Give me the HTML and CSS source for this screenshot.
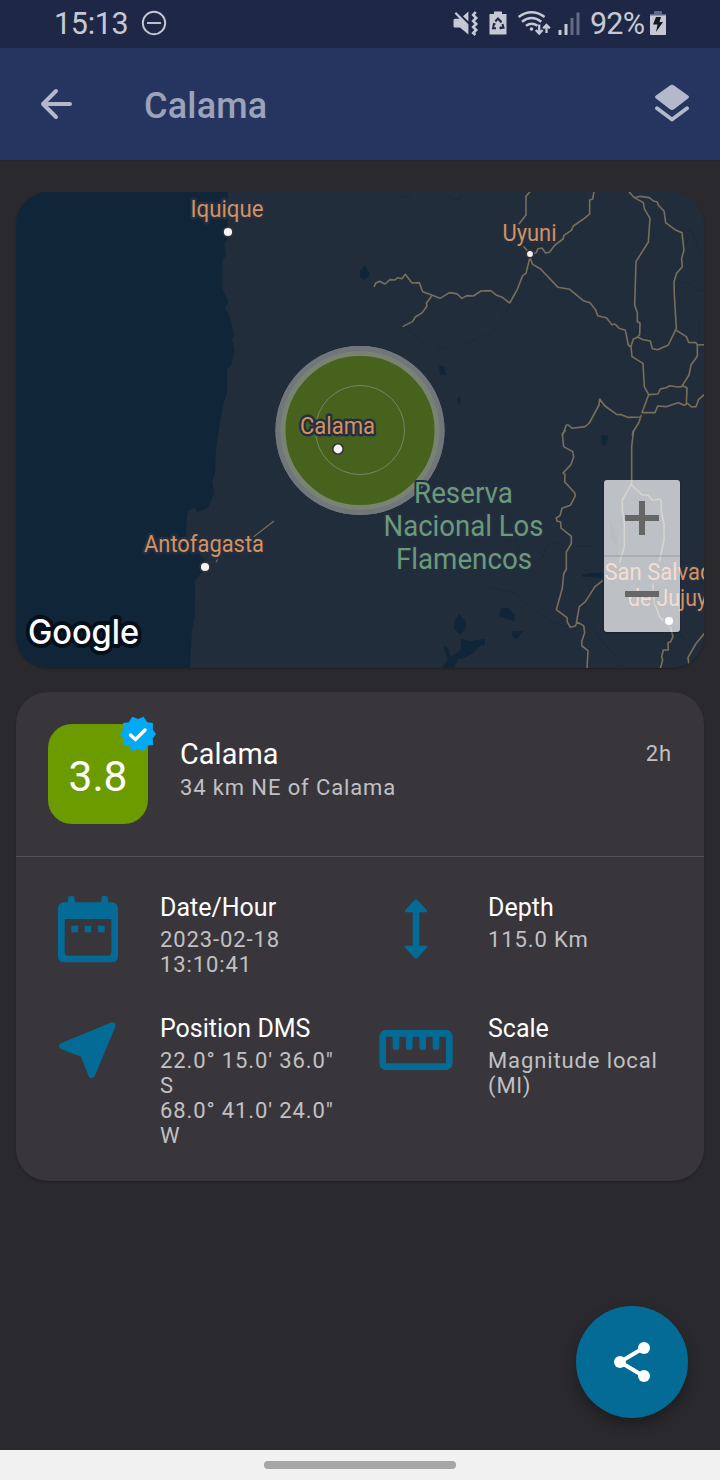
FILE: index.html
```html
<!DOCTYPE html>
<html lang="en">
<head>
<meta charset="utf-8">
<title>Calama</title>
<link rel="stylesheet" href="styles.css">
</head>
<body>
<div class="screen">
  <header class="status">
    <span class="clock">15:13</span>
    <svg class="dnd" width="26" height="26" viewBox="0 0 26 26" fill="none" stroke="#c6c9d3" stroke-width="1.9"><circle cx="13" cy="13" r="11.2"/><path d="M6 13h14"/></svg>
    <svg class="tray" width="136" height="30" viewBox="450 8 136 30" fill="#c6c9d3">
      <path d="M454.600 13.400l1.500-1.500 12.300 12.300v10.300l-8.400-7h-5q-1.500 0-1.500-1.500v-5.800q0-1.500 1.500-1.500h4.600zM463 16.200l5.400-4.700v10z"/>
      <path d="M475.700 12l-2.500 3 3 3-3 3 3 3-3 3 3 3-3 3 2.200 2" fill="none" stroke="#c6c9d3" stroke-width="2.600"/>
      <path d="M494 11.500h8v2.500h4.500v20.500h-17V14h4.500z"/>
      <g fill="none" stroke="#1e2746" stroke-width="2"><path d="M495.300 21.500l2.700-3 3 3.500M502.500 24l1 3.700-3.500.5M496 28.200h-3l1-4.500"/><path d="M500 20l1.500 2.500M501.500 26.500l-2 2M493 23.500l2.500.8" stroke-width="1.500"/></g>
      <g fill="none" stroke="#c6c9d3" stroke-width="2.500"><path d="M518.600 17q13-9.500 26 0M522 21.700q9.700-7.500 19.300 0M526 25.800q5.700-4 11.500 0"/></g><circle cx="531.500" cy="29" r="1.800"/>
      <g stroke="#c6c9d3" stroke-width="2.300" fill="none"><path d="M539.200 24.500v8M535.800 30l3.400 3.500 3.400-3.500M546.500 33v-7M543.200 28.400l3.300-3.400 3.300 3.400"/></g>
      <rect x="558.500" y="30" width="3" height="5"/><rect x="564.500" y="24" width="3" height="11"/><g fill="#626b84"><rect x="570.500" y="18" width="3" height="17"/><rect x="576.500" y="12.500" width="3" height="22.500"/></g>
    </svg>
    <span class="percent">92%</span>
    <svg class="battery" width="16" height="24" viewBox="0 0 16 24"><path d="M4 4V1q0-1 1-1h6q1 0 1 1v3z" fill="#626b84"/><path d="M0 3h16v20q0 1-1 1H1q-1 0-1-1z" fill="#c6c9d3"/><path d="M0 3h16v1.500H0z" fill="#626b84"/><path d="M6 6h5l-1.500 5H13L6 21l1.500-7.500H3z" fill="#17191f"/></svg>
  </header>
  <nav class="appbar">
    <svg class="back" width="32" height="32" viewBox="0 0 32 32" fill="none" stroke="#b3b8ca" stroke-width="4" stroke-linecap="round" stroke-linejoin="round"><path d="M30 16H3M16 3L3 16l13 13"/></svg>
    <h1 class="title">Calama</h1>
    <svg class="layers" width="34" height="38" viewBox="0 0 34 38" fill="#b3b8ca"><path d="M14.900 1.600q2.100-1.500 4.200 0L33 11.500q2 1.500 0 3L19.100 25.200q-2.100 1.500-4.200 0L1 14.500q-2-1.500 0-3z"/><path d="M2 24.200l15 11.300 15-11.300" fill="none" stroke="#b3b8ca" stroke-width="3.800" stroke-linecap="round" stroke-linejoin="round"/></svg>
  </nav>
  <main class="content">
    <section class="map">
      <svg class="map-art" width="688" height="476" viewBox="16 192 688 476">
        <rect x="16" y="192" width="688" height="476" fill="#222d3b"/>
        <g fill="#112539">
          <path transform="translate(16 185) scale(.33333)" d="M0 0H636V160L625 175 630 210 619 230V310L638 350 627 368 640 390 655 450 648 462 656 498 645 542 634 552 633 625 625 645 614 700 606 752H0z"/>
          <path transform="translate(16 430) scale(.33333)" d="M0-5H607L600 60 597 135 589 150 595 190 577 232 541 248 537 232 515 244 511 275V365L550 372 567 390V415L537 452 536 565 528 600 522 720H0z"/>
          <path transform="translate(360 185) scale(.33333)" d="M0 258L15 242 30 267 14 287 0 275zM237 542L252 543 258 570 240 569zM291 642L302 635 299 660z"/>
          <path transform="translate(360 430) scale(.33333)" d="M723 15L747 18 735 47 726 43zM298 551L318 575 315 597 301 614 283 598 284 570zM423 534L447 533 464 556 463 574 418 559zM456 604L489 603 470 628 457 618zM302 625L331 634 375 626 374 645 359 649 337 671 308 686 293 688 283 713H246L264 688 250 648 262 652 272 681 302 660zM666 434L690 430 728 428 728 443 667 440zM751 270L772 320 770 355 750 325z"/>
        </g>
        <g fill="none" stroke="#162638" stroke-width="2" stroke-dasharray="12 5">
          <path transform="translate(360 185) scale(.33333)" d="M448 357L430 395 404 425 396 442 300 482M272 479L230 496M130 425L175 460 195 485M262 31L272 43 300 42 303 28M125 38L145 34 153 23M985 136L996 138 1018 205 1029 220M950 286L990 298 1010 313 1032 318M1018 403L1016 475"/>
          <path transform="translate(360 430) scale(.33333)" d="M466 327L477 360M500 399Q540 405 555 365T600 345M650 350Q690 340 715 365M390 472L465 490 500 525 585 580 625 590M650 575Q690 580 720 625L790 710M950 600L985 640 1000 670"/>
        </g>
        <g fill="none" stroke="#786f5b" stroke-width="4.800" stroke-linejoin="round">
          <g transform="translate(360 185) scale(.33333)">
            <path d="M510 20L498 34V90L476 118M490 184L510 206 528 204 534 191 546 189 557 204 568 202 585 180 609 162 612 151 634 136 640 123 672 101 689 87V45L698 42 702 20"/>
            <path d="M42 306L47 295 59 289 75 297 90 284 104 285 113 278 126 281 136 268 156 294 178 293 188 320 215 330 240 340 268 323 290 326 306 340 320 332 340 333 363 318 392 317 410 331 427 337 449 354 472 313 488 272 498 265 509 220M215 333L199 355 201 363 187 383 166 396 158 409 128 425"/>
            <path d="M510 218L518 238 542 252 594 307 629 313 670 347 690 353 707 375 713 392 739 398 756 419 765 417 777 430 796 436 805 480 813 486 816 515 849 535 853 605 866 629 846 683H885L893 663 918 665 955 653 973 661 982 655 995 666 1008 665 1016 643 1035 627"/>
            <path d="M805 18L823 38 850 53 853 71 870 100 865 171 828 230 824 360 832 383 832 410 840 414 839 450 830 458 820 462 813 484M823 38L840 34 868 38 880 48 891 50 896 62 912 78 917 113 948 136 966 143 972 196 965 220 967 245 950 265 942 290 943 330 949 430 925 480 893 494 877 491 871 468 850 464 832 456M949 436L979 455 986 472 1008 473 1012 480 1035 479M1012 480V514L993 540 987 570 965 605 953 606 930 602 918 608 901 612 894 627 866 629M965 600L981 609 979 657"/>
            <path d="M607 752L619 720 625 720 637 730 675 725 688 714 717 660 719 642 735 663 770 688 784 689 803 697 844 696M844 690L836 714 819 741 817 752"/>
          </g>
          <g transform="translate(360 430) scale(.33333)">
            <path d="M617 0L607 12 611 50 638 65 641 80 633 104 609 129 615 134 614 155 645 190V199L631 226 606 235 600 257 589 264 591 273 602 276 603 294 634 319V341L619 366V417L611 432 607 475 589 539 621 563 622 576 631 592 646 588 651 576 671 587 674 608 665 635 666 648 684 662 681 715M821 0L815 50V160L787 210V240L793 280V350L778 400M815 165L846 195H864L878 211 901 207 904 217 903 240 912 280V330L898 395M649 578L658 530 676 515 705 470 728 452M878 460L884 520 900 563 915 575M931 590L939 620 932 635 924 638 925 660H910L905 680 908 690 901 715M1035 608L1007 642 984 683 988 714"/>
          </g>
          <path transform="translate(16 430) scale(.33333)" d="M713 320L774 273M600 397L605 388" stroke-width="3.500"/>
        </g>
        <circle cx="360" cy="430.500" r="79.500" fill="#46621d" stroke="#798371" stroke-width="10"/>
        <circle cx="360" cy="430.500" r="82" fill="none" stroke="#71757c" stroke-width="5"/>
        <circle cx="360" cy="430" r="44.500" fill="none" stroke="#75866b" stroke-width="1"/>
        <g class="label reserve">
          <text x="414" y="503" textLength="99" lengthAdjust="spacingAndGlyphs">Reserva</text>
          <text x="383.500" y="536" textLength="160" lengthAdjust="spacingAndGlyphs">Nacional Los</text>
          <text x="396" y="569" textLength="136" lengthAdjust="spacingAndGlyphs">Flamencos</text>
        </g>
        <g class="label city">
          <text x="190.500" y="217" textLength="73" lengthAdjust="spacingAndGlyphs">Iquique</text>
          <text x="502.500" y="241" textLength="54" lengthAdjust="spacingAndGlyphs">Uyuni</text>
          <text x="300" y="434" textLength="75" lengthAdjust="spacingAndGlyphs">Calama</text>
          <text x="144" y="552" textLength="120" lengthAdjust="spacingAndGlyphs">Antofagasta</text>
          <text x="604.500" y="580" textLength="128" lengthAdjust="spacingAndGlyphs">San Salvador</text>
          <text x="628" y="606" textLength="79" lengthAdjust="spacingAndGlyphs">de Jujuy</text>
        </g>
        <g fill="#f4f4f4" stroke="#333338" stroke-width="1.600"><circle cx="228" cy="232" r="4.900"/><circle cx="530" cy="254" r="3.700"/><circle cx="338" cy="449" r="5.200"/><circle cx="205" cy="567" r="4.900"/><circle cx="669" cy="621" r="4.900"/></g>
        <text class="brand" x="28" y="643.500" textLength="111" lengthAdjust="spacingAndGlyphs">Google</text>
      </svg>
      <div class="zoom">
        <span class="zoom-btn"><svg width="34" height="34" viewBox="0 0 34 34" fill="none" stroke="#666" stroke-width="6"><path d="M0 17h34M17 0v34"/></svg></span>
        <span class="zoom-btn"><svg width="34" height="34" viewBox="0 0 34 34" fill="none" stroke="#666" stroke-width="6"><path d="M0 16h34"/></svg></span>
      </div>
    </section>
    <section class="card">
      <div class="summary">
        <div class="magnitude">3.8
          <svg class="verified" width="36" height="36" viewBox="0 0 36 36"><path d="M36 18l-3.200 4.400L33 29l-5.700.8L23.700 35.300 18 33l-5.700 2.300-3.600-5.500L3 29l.2-6.600L0 18l3.200-4.400L3 7l5.700-.8L12.300.7 18 3l5.700-2.300 3.600 5.500L33 7l-.2 6.600z" fill="#03a9f4"/><path d="M10.500 19l5 4.500 9.500-9.500" fill="none" stroke="#fff" stroke-width="3.400" stroke-linecap="round"/></svg>
        </div>
        <div class="place"><h2 class="place-name">Calama</h2><p class="detail">34 km NE of Calama</p></div>
        <span class="detail age">2h</span>
      </div>
      <div class="facts">
        <div class="fact">
          <svg class="icon" viewBox="0 0 24 24" fill="#046b97"><path fill-rule="evenodd" d="M6 4V3q0-1 1-1t1 1v1h8V3q0-1 1-1t1 1v1h1q2 0 2 2v14q0 2-2 2H5q-2 0-2-2V6q0-2 2-2zM5 9v10q0 1 1 1h12q1 0 1-1V9zM7 11h2v2H7zm4 0h2v2h-2zm4 0h2v2h-2z"/></svg>
          <div><h3 class="fact-name">Date/Hour</h3><p class="detail">2023-02-18<br>13:10:41</p></div>
        </div>
        <div class="fact">
          <svg class="icon" viewBox="0 0 24 24" fill="#046b97"><path d="M11.500 3.400q.5-.5 1 0l2.700 2.900q.4.700-.4.700H13v10h1.800q.8 0 .4.700l-2.700 2.900q-.5.500-1 0l-2.700-2.900q-.4-.7.400-.7H11V7H9.200q-.8 0-.4-.7z"/></svg>
          <div><h3 class="fact-name">Depth</h3><p class="detail">115.0 Km</p></div>
        </div>
        <div class="fact">
          <svg class="icon" viewBox="0 0 24 24" fill="#046b97"><path d="M18.800 3.850q1.700-.5 1.400 1.200L14 19.900q-.9 1.200-1.800 0L9.900 14 3.900 11.700q-1.200-.8 0-1.700z"/></svg>
          <div><h3 class="fact-name">Position DMS</h3><p class="detail">22.0° 15.0' 36.0"<br>S<br>68.0° 41.0' 24.0"<br>W</p></div>
        </div>
        <div class="fact">
          <svg class="icon" viewBox="0 0 24 24" fill="none" stroke="#046b97" stroke-width="2"><rect x="2" y="7" width="20" height="10" rx="1"/><path d="M6 8v3M10 8v3M14 8v3M18 8v3" stroke-linecap="round"/></svg>
          <div><h3 class="fact-name">Scale</h3><p class="detail">Magnitude local<br>(Ml)</p></div>
        </div>
      </div>
    </section>
    <button class="share" aria-label="Share"><svg width="38" height="42" viewBox="0 0 38 42"><path d="M30.500 7L7 21l23.500 14" fill="none" stroke="#fff" stroke-width="4"/><g fill="#fff"><circle cx="31" cy="7" r="6"/><circle cx="7" cy="21" r="6"/><circle cx="31" cy="35" r="6"/></g></svg></button>
  </main>
  <footer class="gesture"><span class="handle"></span></footer>
</div>
</body>
</html>
```
FILE: styles.css
```css
* { box-sizing: border-box; }
body, h1, h2, h3, p { margin: 0; font-weight: 400; }
svg { display: block; flex: none; }
body { font-family: Roboto, "Noto Sans", sans-serif; background: #2a292d; }
.screen { width: 720px; height: 1480px; display: flex; flex-direction: column; overflow: hidden; }

.status { height: 48px; background: #1e2746; color: #c6c9d3; display: flex; align-items: center; padding: 0 54px; font-size: 30.5px; }
.clock { letter-spacing: -0.3px; width: 75px; padding-bottom: 2px; }
.dnd { margin: -2px 0 0 12px; }
.tray { margin-left: auto; margin-top: -2px; }
.percent { margin-left: 4px; width: 60px; letter-spacing: -.8px; padding-bottom: 2px; }
.battery { margin-top: -2px; }

.appbar { height: 112px; background: #253560; display: flex; align-items: center; padding: 0 31px 0 40px; }
.title { margin-left: 72px; padding-top: 4px; font-size: 36px; font-weight: 500; letter-spacing: .2px; color: #9ba2b9; }
.layers { margin-left: auto; margin-top: -2px; }

.content { flex: 1; display: flex; flex-direction: column; padding: 31px 16px 0; border-top: 1px solid #252730; }
.map { height: 476px; position: relative; flex: none; border-radius: 32px; overflow: hidden; box-shadow: 0 1px 2px rgba(0, 0, 0, .25); }
.label { paint-order: stroke; stroke: #232e40; stroke-linejoin: round; }
.city { font-size: 24px; fill: #d3925f; stroke-width: 5px; }
.reserve { font-size: 29px; fill: #6a9a78; stroke-width: 4px; }
.brand { font-family: Inter, sans-serif; font-size: 34px; font-weight: 500; fill: #fff; paint-order: stroke; stroke: #06101b; stroke-width: 8px; stroke-linejoin: round; }
.zoom { position: absolute; left: 588px; top: 288px; width: 76px; height: 152px; background: rgba(255, 255, 255, .7); border-radius: 3px; box-shadow: 0 1px 2px rgba(0, 0, 0, .3); display: flex; flex-direction: column; }
.zoom-btn { flex: 1; display: flex; align-items: center; justify-content: center; }
.zoom-btn + .zoom-btn { border-top: 2px solid rgba(100, 100, 100, .2); }

.card { margin-top: 24px; height: 489px; flex: none; border-radius: 32px; background: #38363b; box-shadow: 0 1px 2px rgba(0, 0, 0, .25); }
.summary { height: 165px; border-bottom: 1px solid #515054; padding: 32px; display: flex; }
.magnitude { position: relative; width: 100px; height: 100px; border-radius: 24px; background: #6c9b00; color: #fff; font-size: 42.500px; line-height: 106px; text-align: center; }
.verified { position: absolute; left: 72px; top: -8px; }
.place { margin-left: 32px; padding-top: 13px; }
.place-name { font-size: 28.800px; line-height: 34px; letter-spacing: .1px; color: #fff; }
.detail { font-size: 22px; line-height: 25px; letter-spacing: .88px; color: #c1c1c3; }
.place .detail { margin-top: 4px; }
.age { margin: 17px 0 0 auto; }
.facts { display: grid; grid-template-columns: 328px 1fr; grid-template-rows: 121px auto; padding: 32px; }
.fact { display: flex; gap: 32px; }
.fact > div { padding-top: 4px; }
.icon { width: 80px; height: 80px; }
.fact-name { font-size: 25px; line-height: 30px; color: #fff; margin-bottom: 4px; }

.share { margin: 125px 16px 0 auto; width: 112px; height: 112px; flex: none; border: 0; border-radius: 50%; background: #046b97; box-shadow: 0 7px 14px rgba(0, 0, 0, .3); display: flex; align-items: center; justify-content: center; padding: 0; }
.gesture { height: 30px; background: #f1f1f1; display: flex; align-items: center; justify-content: center; }
.handle { width: 192px; height: 8px; border-radius: 4px; background: #a6a6a6; }
```
